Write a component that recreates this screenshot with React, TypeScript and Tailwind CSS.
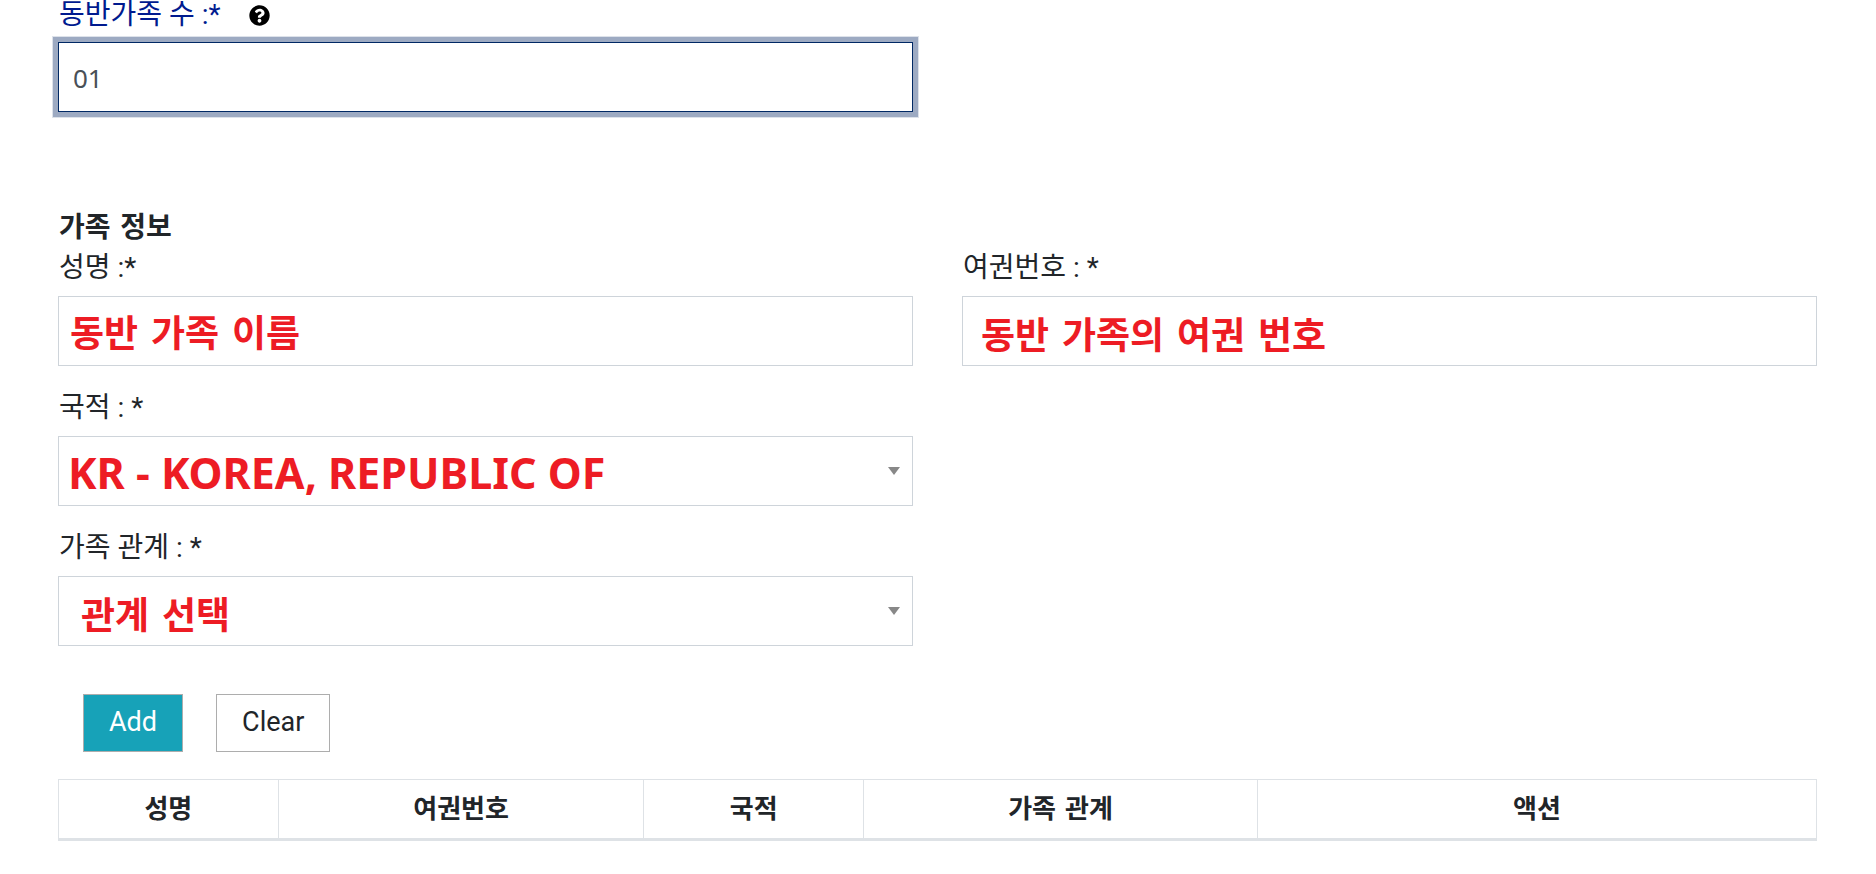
import type { ReactNode } from "react";

const control =
  "block h-[70px] w-full appearance-none border border-[#ced4da] bg-white outline-none";
const redKorean =
  "font-['DejaVu_Sans','Noto_Sans_CJK_KR',sans-serif] text-[37px] font-bold text-[#ed1c24]";

function Field({ id, label, children }: { id: string; label: string; children: ReactNode }) {
  return (
    <div>
      <label htmlFor={id} className="mb-2 block h-[39px] pl-px text-[28px] leading-[37px]">
        {label}
      </label>
      {children}
    </div>
  );
}

function SelectBox({ id, value, className }: { id: string; value: string; className: string }) {
  return (
    <div className="relative">
      <select id={id} className={`${control} ${className}`}>
        <option>{value}</option>
      </select>
      <svg
        viewBox="0 0 12 8"
        className="pointer-events-none absolute top-[31px] right-[13px] h-2 w-3"
        aria-hidden="true"
      >
        <path d="M0 0H12L6 8Z" fill="#888888" />
      </svg>
    </div>
  );
}

const columns = [
  { name: "성명", width: "w-[12.5%]" },
  { name: "여권번호", width: "w-[20.8%]" },
  { name: "국적", width: "w-[12.5%]" },
  { name: "가족 관계", width: "w-[22.4%]" },
  { name: "액션", width: "w-[31.8%]" },
];

export default function App() {
  return (
    <main className="min-h-screen bg-white pr-[59px] pb-8 pl-[58px] font-['Roboto','Noto_Sans_CJK_KR',sans-serif] text-[#212529]">
      <div className="grid grid-cols-2 gap-x-[49px]">
        <div>
          <div className="flex h-[42px] items-start gap-7 pl-px text-[#001a8f]">
            <label htmlFor="family-count" className="pt-px text-[28px] leading-7">
              동반가족 수 :*
            </label>
            <svg viewBox="0 0 512 512" className="mt-[5px] h-[21px] w-[21px]" aria-hidden="true">
              <path
                fill="#000"
                d="M504 256c0 136.997-111.043 248-248 248S8 392.997 8 256C8 119.083 119.043 8 256 8s248 111.083 248 248zM262.655 90c-54.497 0-89.255 22.957-116.549 63.758-3.536 5.286-2.353 12.415 2.715 16.258l34.699 26.31c5.205 3.947 12.621 3.008 16.665-2.122 17.864-22.658 30.113-35.797 57.303-35.797 20.429 0 45.698 13.148 45.698 32.958 0 14.976-12.363 22.667-32.534 33.976C247.128 238.528 216 254.941 216 296v4c0 6.627 5.373 12 12 12h56c6.627 0 12-5.373 12-12v-1.333c0-28.462 83.186-29.647 83.186-106.667 0-58.002-60.165-102-116.531-102zM256 338c-25.365 0-46 20.635-46 46 0 25.364 20.635 46 46 46s46-20.636 46-46c0-25.365-20.635-46-46-46z"
              />
            </svg>
          </div>
          <input
            id="family-count"
            defaultValue="01"
            className="block h-[70px] w-full border border-[#002864] bg-white px-[14px] pt-0.5 font-['Noto_Sans',sans-serif] text-[26px] text-[#495057] shadow-[0_0_0_5px_#9daac2,0_0_0_6px_#dde2ea] outline-none"
          />
        </div>
      </div>

      <section className="pt-[98px]">
        <h2 className="h-[39px] pl-px font-['DejaVu_Sans','Noto_Sans_CJK_KR',sans-serif] text-[28px] leading-9 font-bold">
          가족 정보
        </h2>
        <div className="grid grid-cols-2 gap-x-[49px] gap-y-[23px]">
          <Field id="name" label="성명 :*">
            <input id="name" defaultValue="동반 가족 이름" className={`${control} ${redKorean} px-[11px]`} />
          </Field>
          <Field id="passport" label="여권번호 : *">
            <input id="passport" defaultValue="동반 가족의 여권 번호" className={`${control} ${redKorean} px-[18px] pt-1`} />
          </Field>
          <div className="col-start-1">
            <Field id="nationality" label="국적 : *">
              <SelectBox
                id="nationality"
                value="KR - KOREA, REPUBLIC OF"
                className="px-[9px] pt-1 font-['Noto_Sans',sans-serif] text-[43px] font-bold text-[#ed1c24]"
              />
            </Field>
          </div>
          <div className="col-start-1">
            <Field id="relation" label="가족 관계 : *">
              <SelectBox id="relation" value="관계 선택" className={`${redKorean} px-[22px] pt-3`} />
            </Field>
          </div>
        </div>
      </section>

      <div className="mt-12 flex gap-[33px] pl-[25px] text-[27px]">
        <button type="button" className="h-[58px] border border-[#adadad] bg-[#17a2b8] px-[25px] pb-0.5 text-white">
          Add
        </button>
        <button type="button" className="h-[58px] border border-[#adadad] bg-white px-[25px] pb-0.5">
          Clear
        </button>
      </div>

      <table className="mt-[27px] w-full table-fixed border-collapse border border-[#dee2e6] font-['DejaVu_Sans','Noto_Sans_CJK_KR',sans-serif] text-[26px]">
        <thead>
          <tr>
            {columns.map((c) => (
              <th
                key={c.name}
                scope="col"
                className={`${c.width} h-[60px] border border-b-[3px] border-[#dee2e6] p-0 leading-9 font-bold`}
              >
                {c.name}
              </th>
            ))}
          </tr>
        </thead>
      </table>
    </main>
  );
}
